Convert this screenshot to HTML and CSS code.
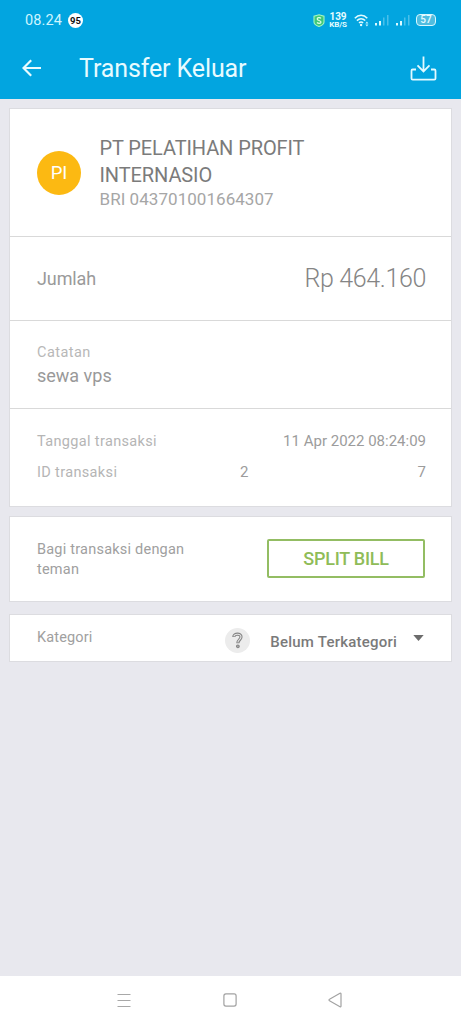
FILE: index.html
```html
<!DOCTYPE html>
<html lang="id">
<head>
<meta charset="utf-8">
<title>Transfer Keluar</title>
<link rel="stylesheet" href="styles.css">
</head>
<body>
<div class="screen">
  <header class="header">
    <div class="status">
      <span class="clock">08.24</span>
      <span class="badge">95</span>
      <div class="indicators">
        <svg class="shield" width="12" height="13" viewBox="0 0 12 13"><path d="M6 .7 11 2.2V8c0 2-2.3 3.6-5 4.5C3.300 11.600 1 10 1 8V2.200z" fill="#3fc878" stroke="#a5f5c0" stroke-width="1.100"/><path d="M8 4.300C7.200 3.400 4.200 3.300 4.200 5s3.800 1.200 3.800 3-3 1.600-4 .5" fill="none" stroke="#e0ffe8" stroke-width="1.200"/></svg>
        <div class="speed"><span class="rate">139</span><span class="unit">KB/S</span></div>
        <svg class="wifi" width="16" height="13" viewBox="0 0 16 13"><g fill="none" stroke="#e2fbff" stroke-width="1.500"><path d="M.8 4.300C4.500.3 9.700.3 13.300 4.300"/><path d="M2.900 6.600C5.500 4 8.700 4 11.200 6.600"/><path d="M5 8.900C6.400 7.700 7.800 7.700 9.100 8.900"/></g><circle cx="7.100" cy="11" r="1.200" fill="#e2fbff"/><path d="m12.900 7.400 1.500 2h-3zM12.900 12.400l1.500-2h-3z" fill="#c6f3ff"/></svg>
        <svg class="signal" width="15" height="12" viewBox="0 0 15 12"><path d="M1 9h2v2.500H1zM5 7h2v4.500H5z" fill="#dcfaff"/><path d="M9 3.500h1.500v8H9zM13 1h1.500v10.500H13z" fill="#4ac0ea"/></svg>
        <svg class="signal second" width="15" height="12" viewBox="0 0 15 12"><path d="M1 9h2v2.500H1zM5 7h2v4.500H5z" fill="#dcfaff"/><path d="M9 3.500h1.500v8H9zM13 1h1.500v10.500H13z" fill="#4ac0ea"/></svg>
        <span class="battery">57</span>
      </div>
    </div>
    <div class="toolbar">
      <svg class="back" width="20" height="18" viewBox="0 0 20 18"><path d="M19 9H1.500M9.200 1.300 1.500 9l7.700 7.700" fill="none" stroke="#e8fbff" stroke-width="2.200"/></svg>
      <h1 class="title">Transfer Keluar</h1>
      <svg class="save" width="27" height="26" viewBox="0 0 27 26"><path d="M13.500.5v15M7.500 9.300l6 6.200 6-6.200M6 13.500H2.700a1.200 1.200 0 0 0-1.200 1.200v7.800a1.200 1.200 0 0 0 1.200 1.200h21.600a1.200 1.200 0 0 0 1.200-1.200v-7.800a1.200 1.200 0 0 0-1.200-1.200H21" fill="none" stroke="#e3faff" stroke-width="1.800"/></svg>
    </div>
  </header>

  <main class="content">
    <section class="card">
      <div class="recipient">
        <div class="avatar">PI</div>
        <div>
          <div class="name">PT PELATIHAN PROFIT<br>INTERNASIO</div>
          <div class="account">BRI 043701001664307</div>
        </div>
      </div>
      <div class="amount">
        <span class="amount-label">Jumlah</span>
        <span class="amount-value">Rp 464.160</span>
      </div>
      <div class="note">
        <div class="note-label">Catatan</div>
        <div class="note-text">sewa vps</div>
      </div>
      <div class="details">
        <div class="detail"><span class="key">Tanggal transaksi</span><span class="value">11 Apr 2022 08:24:09</span></div>
        <div class="detail"><span class="key">ID transaksi</span><span class="value id"><span>2</span><span>7</span></span></div>
      </div>
    </section>

    <section class="card split">
      <p class="split-text">Bagi transaksi dengan<br>teman</p>
      <button class="split-button">SPLIT BILL</button>
    </section>

    <section class="card category">
      <span class="category-label">Kategori</span>
      <span class="help"><svg width="11" height="17" viewBox="0 0 12 18" fill="none"><path d="M2 5.300C2 .8 10 1 9.800 5.200 9.700 8 6.500 8 6.400 12" stroke="#848484" stroke-width="3.500"/><path d="M2 4.500C2.600 1.300 9.900 1.300 9.800 5.200 9.700 8 6.500 8 6.400 11.200" stroke="#e6e6e6" stroke-width="1.200"/><circle cx="6.400" cy="15.300" r="1.500" fill="#aaa" stroke="#848484" stroke-width="1.100"/></svg></span>
      <span class="category-value">Belum Terkategori</span>
      <svg class="caret" width="11" height="6" viewBox="0 0 11 6"><path d="M.3 0h10.400L5.500 6z" fill="#6c6c6c"/></svg>
    </section>
  </main>

  <nav class="navbar">
    <svg width="14" height="14" viewBox="0 0 14 14"><path d="M.5 1.500h13M.5 7.500h13M.5 13.500h13" stroke="#a8a8a8"/></svg>
    <svg width="14" height="14" viewBox="0 0 14 14"><rect x=".9" y=".9" width="12.200" height="12.200" rx="2" fill="none" stroke="#a2a2a2" stroke-width="1.200"/></svg>
    <svg width="14" height="16" viewBox="0 0 14 16"><path d="M12 1.300 1.500 7.200a.9.900 0 0 0 0 1.600L12 14.700a.7.700 0 0 0 1-.7V2a.7.700 0 0 0-1-.7z" fill="none" stroke="#a2a2a2" stroke-width="1.200"/></svg>
  </nav>
</div>
</body>
</html>
```
FILE: styles.css
```css
* { box-sizing: border-box; }
body { margin: 0; font-family: Roboto, "Liberation Sans", sans-serif; }
.screen { width: 461px; height: 1024px; display: flex; flex-direction: column; background: #e8e8ee; overflow: hidden; }
.header { height: 99px; background: #02a5e0; color: #e8fbff; }
.status { height: 38px; padding: 2px 25px 0; display: flex; align-items: center; }
.clock { font-size: 14.500px; letter-spacing: .1px; color: #cff5ff; }
.badge { margin-left: 6px; width: 15px; height: 15px; border-radius: 50%; background: #fff; color: #111; font-size: 9.500px; font-weight: 700; line-height: 15px; text-align: center; }
.indicators { margin-left: auto; display: flex; align-items: center; }
.speed { margin-left: 4px; width: 18px; display: flex; flex-direction: column; align-items: center; color: #e5fcff; font-weight: 700; }
.rate { font-size: 10px; line-height: 8px; }
.unit { font-size: 8px; line-height: 7px; letter-spacing: -.1px; }
.wifi { margin-left: 7px; }
.signal { margin-left: 4px; }
.second { margin-left: 6px; }
.battery { margin-left: 6px; width: 20px; height: 12px; border: 1.500px solid #d8f8ff; border-radius: 4px; background: #50bde0; font-size: 10px; line-height: 10px; text-align: center; font-weight: 500; }
.toolbar { height: 60px; padding: 0 24px 0 22px; display: flex; align-items: center; }
.title { margin: 2px 0 0 37px; font-size: 25px; font-weight: 400; line-height: 30px; letter-spacing: -.12px; }
.save { margin: 1px 0 0 auto; }
.content { flex: 1; padding: 9px 9px 0; }
.card { border: 1px solid #dcdce0; background: #fff; }
.recipient { height: 127px; padding: 26px 27px 0; display: flex; gap: 18.500px; }
.avatar { width: 44px; height: 44px; margin-top: 16px; border-radius: 50%; background: #fcb912; color: #fff; font-size: 18.500px; line-height: 44px; text-align: center; }
.name { font-size: 20px; line-height: 27px; color: #7b7b7b; letter-spacing: -.1px; }
.account { font-size: 17px; line-height: 21px; color: #a6a6a6; letter-spacing: .05px; }
.amount { height: 84px; border-top: 1px solid #d9d9d9; padding: 0 25px 0 27px; display: flex; justify-content: space-between; align-items: center; color: #858585; }
.amount-label { font-size: 18px; color: #9a9a9a; letter-spacing: -.1px; }
.amount-value { font-size: 25px; font-weight: 300; line-height: 30px; letter-spacing: -.35px; }
.note { height: 88px; border-top: 1px solid #d9d9d9; padding: 22px 27px 0; }
.note-label { font-size: 14.500px; line-height: 20px; color: #b8b8b8; letter-spacing: .45px; }
.note-text { font-size: 18px; line-height: 26px; color: #999; }
.details { height: 98px; border-top: 1px solid #d9d9d9; padding: 17px 25px 0 27px; }
.detail { display: flex; justify-content: space-between; align-items: baseline; font-size: 15px; line-height: 30px; color: #9c9c9c; }
.key { font-size: 14.500px; color: #b5b5b5; letter-spacing: .35px; }
.id { width: 186px; display: flex; justify-content: space-between; }
.split { margin-top: 9px; height: 86px; padding: 0 26px 0 27px; display: flex; justify-content: space-between; align-items: center; }
.split-text { margin: 1px 0 0; font-size: 14.500px; line-height: 20px; color: #a0a0a0; letter-spacing: .22px; }
.split-button { width: 158px; height: 39px; margin-bottom: 1px; padding: 0; border: 2px solid #93bd63; border-radius: 2px; background: #fff; color: #8fbc58; font: 500 18px/35px Roboto, sans-serif; letter-spacing: -.25px; }
.category { margin-top: 12px; height: 48px; padding: 0 27px; display: flex; align-items: flex-start; }
.category-label { margin-top: 13px; font-size: 14.500px; line-height: 20px; color: #a0a0a0; letter-spacing: .15px; }
.help { margin: 13px 20px 0 auto; width: 25px; height: 25px; border-radius: 50%; background: #ececec; display: flex; align-items: center; justify-content: center; }
.category-value { margin-top: 17px; font-size: 15px; font-weight: 500; line-height: 20px; color: #7a7a7a; letter-spacing: .22px; }
.caret { margin: 20px 0 0 16px; }
.navbar { height: 48px; background: #fff; padding: 0 119px 0 117px; display: flex; align-items: center; justify-content: space-between; }
```
